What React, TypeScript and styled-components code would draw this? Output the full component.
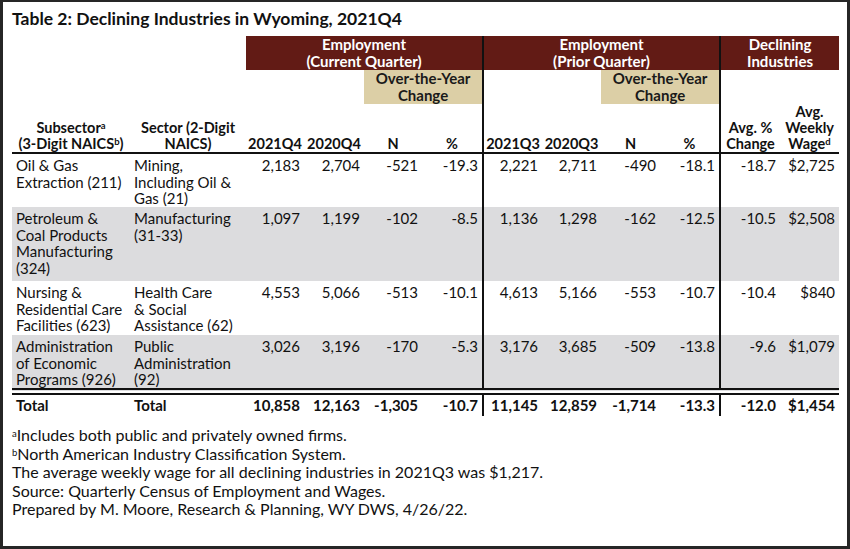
import React from "react";
import styled, { createGlobalStyle } from "styled-components";

const Global = createGlobalStyle`
  html, body { margin: 0; padding: 0; background: #fff; }
  body { font-family: Lato, "Liberation Sans", sans-serif; color: #111; }
`;

const Frame = styled.div`
  width: 850px;
  height: 549px;
  box-sizing: border-box;
  border: 3px solid #262626;
  border-top-width: 2px;
  padding: 7px 8px 0 9px;
  display: flex;
  flex-direction: column;
`;

const Title = styled.h1`
  margin: 0;
  font-size: 17.5px;
  font-weight: 700;
  line-height: 20px;
`;

const Table = styled.table`
  margin-top: 7px;
  width: 827px;
  table-layout: fixed;
  border-collapse: collapse;
  font-size: 15px;
  line-height: 16.5px;
`;

const Cell = styled.td<{ $divider?: boolean; $align?: string }>`
  padding: 3px 4px 0 4px;
  vertical-align: top;
  white-space: nowrap;
  text-align: ${(p) => p.$align || "left"};
  border-left: ${(p) => (p.$divider ? "2px solid #111" : "none")};
`;

const Line = styled.span`
  display: block;
`;

const BandCell = styled.th<{ $divider?: boolean }>`
  height: 34px;
  padding: 0;
  background: #621b15;
  color: #fff;
  font-weight: 700;
  font-size: 15px;
  line-height: 17px;
  text-align: center;
  vertical-align: middle;
  border-left: ${(p) => (p.$divider ? "2px solid #111" : "none")};
`;

const TanCell = styled.th<{ $tan?: boolean; $divider?: boolean }>`
  height: 34px;
  padding: 0;
  background: ${(p) => (p.$tan ? "#dccfa6" : "transparent")};
  color: #1a1a1a;
  font-weight: 700;
  font-size: 15px;
  line-height: 17px;
  text-align: center;
  vertical-align: middle;
  border-left: ${(p) => (p.$divider ? "2px solid #111" : "none")};
`;

const LabelCell = styled.th<{ $divider?: boolean }>`
  height: 48px;
  padding: 0 1px 0 1px;
  font-weight: 700;
  font-size: 14.5px;
  line-height: 16px;
  text-align: center;
  vertical-align: bottom;
  white-space: nowrap;
  border-left: ${(p) => (p.$divider ? "2px solid #111" : "none")};
  border-bottom: 2px solid #111;
`;

const Row = styled.tr<{ $shade?: boolean; $h: number }>`
  height: ${(p) => p.$h}px;
  background: ${(p) => (p.$shade ? "#dcdcde" : "transparent")};
`;

const TotalRow = styled.tr`
  border-top: 7px double #111;
  font-weight: 700;
  td {
    padding-top: 2px;
    padding-bottom: 3px;
  }
`;

const Sup = styled.sup`
  font-size: 9.5px;
  line-height: 0;
  vertical-align: 4px;
`;

const Notes = styled.div`
  margin-top: 10px;
  font-size: 16px;
  line-height: 18.5px;
`;

const NoteLine = styled.div``;

type DataRow = {
  sub: string[];
  sector: string[];
  vals: string[];
  h: number;
  shade?: boolean;
};

const rows: DataRow[] = [
  {
    sub: ["Oil & Gas", "Extraction (211)"],
    sector: ["Mining,", "Including Oil &", "Gas (21)"],
    vals: ["2,183", "2,704", "-521", "-19.3", "2,221", "2,711", "-490", "-18.1", "-18.7", "$2,725"],
    h: 54,
  },
  {
    sub: ["Petroleum &", "Coal Products", "Manufacturing", "(324)"],
    sector: ["Manufacturing", "(31-33)"],
    vals: ["1,097", "1,199", "-102", "-8.5", "1,136", "1,298", "-162", "-12.5", "-10.5", "$2,508"],
    h: 74,
    shade: true,
  },
  {
    sub: ["Nursing &", "Residential Care", "Facilities (623)"],
    sector: ["Health Care", "& Social", "Assistance (62)"],
    vals: ["4,553", "5,066", "-513", "-10.1", "4,613", "5,166", "-553", "-10.7", "-10.4", "$840"],
    h: 54,
  },
  {
    sub: ["Administration", "of Economic", "Programs (926)"],
    sector: ["Public", "Administration", "(92)"],
    vals: ["3,026", "3,196", "-170", "-5.3", "3,176", "3,685", "-509", "-13.8", "-9.6", "$1,079"],
    h: 51,
    shade: true,
  },
];

const totals = ["10,858", "12,163", "-1,305", "-10.7", "11,145", "12,859", "-1,714", "-13.3", "-12.0", "$1,454"];

const widths = [118, 116, 58, 60, 58, 61, 59, 59, 59, 60, 60, 59];
const dividerAt = (i: number) => i === 4 || i === 8;

export default function App() {
  return (
    <>
      <Global />
      <Frame>
        <Title>Table 2: Declining Industries in Wyoming, 2021Q4</Title>
        <Table>
          <colgroup>
            {widths.map((w, i) => (
              <col key={i} style={{ width: w }} />
            ))}
          </colgroup>
          <thead>
            <tr>
              <LabelCell rowSpan={3}>
                Subsector<Sup>a</Sup>
                <br />
                (3-Digit NAICS<Sup>b</Sup>)
              </LabelCell>
              <LabelCell rowSpan={3}>
                Sector (2-Digit
                <br />
                NAICS)
              </LabelCell>
              <BandCell colSpan={4}>
                Employment
                <br />
                (Current Quarter)
              </BandCell>
              <BandCell colSpan={4} $divider>
                Employment
                <br />
                (Prior Quarter)
              </BandCell>
              <BandCell colSpan={2} $divider>
                Declining
                <br />
                Industries
              </BandCell>
            </tr>
            <tr>
              <TanCell colSpan={2} />
              <TanCell colSpan={2} $tan>
                Over-the-Year
                <br />
                Change
              </TanCell>
              <TanCell colSpan={2} $divider />
              <TanCell colSpan={2} $tan>
                Over-the-Year
                <br />
                Change
              </TanCell>
              <TanCell colSpan={2} $divider />
            </tr>
            <tr>
              <LabelCell>2021Q4</LabelCell>
              <LabelCell>2020Q4</LabelCell>
              <LabelCell>N</LabelCell>
              <LabelCell>%</LabelCell>
              <LabelCell $divider>2021Q3</LabelCell>
              <LabelCell>2020Q3</LabelCell>
              <LabelCell>N</LabelCell>
              <LabelCell>%</LabelCell>
              <LabelCell $divider>
                Avg. %
                <br />
                Change
              </LabelCell>
              <LabelCell>
                Avg.
                <br />
                Weekly
                <br />
                Wage<Sup>d</Sup>
              </LabelCell>
            </tr>
          </thead>
          <tbody>
            {rows.map((r, ri) => (
              <Row key={ri} $shade={r.shade} $h={r.h}>
                <Cell>
                  {r.sub.map((l, li) => (
                    <Line key={li}>{l}</Line>
                  ))}
                </Cell>
                <Cell>
                  {r.sector.map((l, li) => (
                    <Line key={li}>{l}</Line>
                  ))}
                </Cell>
                {r.vals.map((v, i) => (
                  <Cell key={i} $align="right" $divider={dividerAt(i)}>
                    {v}
                  </Cell>
                ))}
              </Row>
            ))}
            <TotalRow>
              <Cell>Total</Cell>
              <Cell>Total</Cell>
              {totals.map((v, i) => (
                <Cell key={i} $align="right" $divider={dividerAt(i)}>
                  {v}
                </Cell>
              ))}
            </TotalRow>
          </tbody>
        </Table>
        <Notes>
          <NoteLine>
            <Sup>a</Sup>Includes both public and privately owned firms.
          </NoteLine>
          <NoteLine>
            <Sup>b</Sup>North American Industry Classification System.
          </NoteLine>
          <NoteLine>The average weekly wage for all declining industries in 2021Q3 was $1,217.</NoteLine>
          <NoteLine>Source: Quarterly Census of Employment and Wages.</NoteLine>
          <NoteLine>Prepared by M. Moore, Research &amp; Planning, WY DWS, 4/26/22.</NoteLine>
        </Notes>
      </Frame>
    </>
  );
}
